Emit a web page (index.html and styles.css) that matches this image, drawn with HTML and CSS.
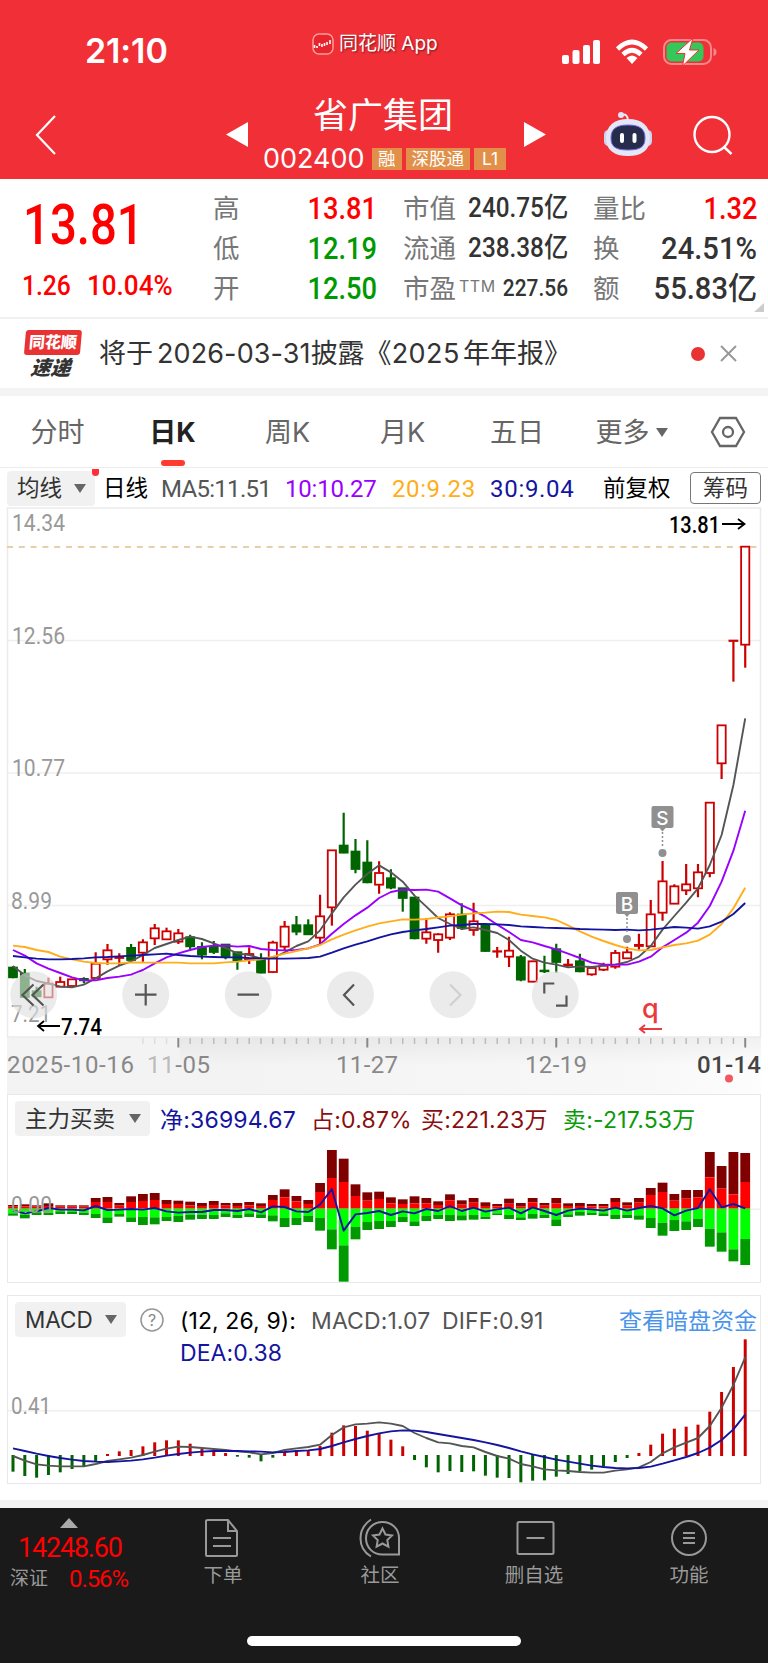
FILE: index.html
```html
<!DOCTYPE html>
<html lang="zh-CN">
<head>
  <meta charset="UTF-8">
  <meta name="viewport" content="width=device-width, initial-scale=1.0">
  <title>省广集团 002400</title>
  <link rel="stylesheet" href="styles.css">
</head>
<body>
  <header class="header">
    <div class="status-bar">
      <div class="time">21:10</div>
      <div class="app-name">
        <svg width="22" height="22" viewBox="0 0 22 22">
          <rect x="1" y="1" width="20" height="20" rx="6" fill="#e8252c" stroke="#ff9a9c" stroke-width="1.5"/>
          <path d="M2.500 12v3M5 13v2M7.500 10v3M10 11v3M12.500 10v3M15 9v3M18 7v4" stroke="#fff" stroke-width="1.600"/>
        </svg>
        <span>同花顺 App</span>
      </div>
      <div class="status-icons">
        <svg width="40" height="26" viewBox="0 0 40 26" fill="#fff">
          <rect x="1" y="16" width="7" height="9" rx="2"/>
          <rect x="11.500" y="11" width="7" height="14" rx="2"/>
          <rect x="22" y="6" width="7" height="19" rx="2"/>
          <rect x="32" y="1" width="7" height="24" rx="2"/>
        </svg>
        <svg width="34" height="26" viewBox="0 0 34 26" fill="none" stroke="#fff" stroke-width="4.600">
          <path d="M2.500 10Q17-4 31.500 10"/>
          <path d="M8 15.500Q17 7 26 15.500"/>
          <path d="M17 25l-5.500-6Q17 14 22.500 19z" fill="#fff" stroke="none"/>
        </svg>
        <svg width="54" height="28" viewBox="0 0 54 28">
          <rect x="1" y="2" width="47" height="24" rx="7.500" fill="none" stroke="#f9888c" stroke-width="2"/>
          <path d="M50.500 10q3 1 3 4t-3 4z" fill="#f9888c"/>
          <rect x="3.500" y="4.500" width="37" height="19" rx="5" fill="#34c759"/>
          <path d="M30 0L13 15.500h9L19.500 28 36 12h-9.500z" fill="#fff" stroke="#f12f37" stroke-width="1"/>
        </svg>
      </div>
    </div>
    <div class="nav">
      <svg class="back" width="24" height="42" viewBox="0 0 24 42"><path d="M21 2L3 21l18 19" fill="none" stroke="#fff" stroke-width="2.200"/></svg>
      <svg class="prev" width="22" height="25" viewBox="0 0 22 25"><path d="M22 0v25L0 12.500z" fill="#fff"/></svg>
      <div class="stock">
        <div class="stock-name">省广集团</div>
        <div class="stock-code">
          <span class="code">002400</span>
          <span class="tag">融</span>
          <span class="tag">深股通</span>
          <span class="tag">L1</span>
        </div>
      </div>
      <svg class="next" width="22" height="25" viewBox="0 0 22 25"><path d="M0 0v25l22-12.500z" fill="#fff"/></svg>
      <svg class="robot" width="48" height="46" viewBox="0 0 48 46">
        <path d="M17 4q7-2 7 6" fill="none" stroke="#e9edfb" stroke-width="2"/>
        <circle cx="17" cy="4" r="3" fill="#dfe4f7"/>
        <rect x="0" y="19" width="9" height="16" rx="4.500" fill="#cbd3ef"/>
        <rect x="39" y="19" width="9" height="16" rx="4.500" fill="#cbd3ef"/>
        <path d="M24 8C38 8 46 15 46 27S38 45 24 45 2 39 2 27 10 8 24 8z" fill="#e3e7f8"/>
        <path d="M24 14c12 0 17 4 17 13s-5 12-17 12S7 36 7 27s5-13 17-13z" fill="#262d4c" stroke="#7568dc" stroke-width="1"/>
        <rect x="16" y="22" width="4" height="10" rx="2" fill="#fff"/>
        <rect x="28.500" y="22" width="4" height="10" rx="2" fill="#fff"/>
      </svg>
      <svg class="search" width="40" height="40" viewBox="0 0 40 40" fill="none" stroke="#fff" stroke-width="2.400"><circle cx="19" cy="19.500" r="17.500"/><path d="M30.500 31.500l8 7.500"/></svg>
    </div>
  </header>

  <section class="quote">
    <div class="price-col">
      <div class="price"><span class="num">13.81</span></div>
      <div class="change"><span class="num">1.26</span><span class="num">10.04%</span></div>
    </div>
    <div class="col col-a">
      <div class="cell"><label>高</label><span class="num up">13.81</span></div>
      <div class="cell"><label>低</label><span class="num down">12.19</span></div>
      <div class="cell"><label>开</label><span class="num down">12.50</span></div>
    </div>
    <div class="col col-b">
      <div class="cell"><label>市值</label><span class="num">240.75亿</span></div>
      <div class="cell"><label>流通</label><span class="num">238.38亿</span></div>
      <div class="cell"><label>市盈<sup>TTM</sup></label><span class="num small">227.56</span></div>
    </div>
    <div class="col col-c">
      <div class="cell"><label>量比</label><span class="num up">1.32</span></div>
      <div class="cell"><label>换</label><span class="num wide">24.51%</span></div>
      <div class="cell"><label>额</label><span class="num wide">55.83亿</span></div>
    </div>
    <div class="corner"></div>
  </section>

  <section class="news">
    <div class="news-logo"><b>同花顺</b><i>速递</i></div>
    <div class="news-text">将于<span class="date">2026-03-31</span>披露《<span class="year">2025</span>年年报》</div>
    <div class="dot"></div>
    <svg width="17" height="17" viewBox="0 0 17 17" stroke="#999" stroke-width="2"><path d="M1 1l15 15M16 1L1 16"/></svg>
  </section>

  <nav class="tabs">
    <div class="tab">分时</div>
    <div class="tab active">日K</div>
    <div class="tab">周K</div>
    <div class="tab">月K</div>
    <div class="tab">五日</div>
    <div class="tab">更多<span class="caret"></span></div>
    <svg width="36" height="32" viewBox="0 0 36 32" fill="none" stroke="#666" stroke-width="2.300"><path d="M10 2h16l8 14-8 14H10L2 16z"/><circle cx="18" cy="16" r="5"/></svg>
  </nav>

  <div class="ma-row">
    <div class="pill">均线<span class="caret"></span></div>
    <span class="period">日线</span>
    <span class="ma ma5">MA5:11.51</span>
    <span class="ma ma10">10:10.27</span>
    <span class="ma ma20">20:9.23</span>
    <span class="ma ma30">30:9.04</span>
    <span class="adjust">前复权</span>
    <span class="chips">筹码</span>
  </div>

  <svg class="chart" id="kline" width="768" height="587" viewBox="0 507 768 587">
    <defs>
      <linearGradient id="strip" x1="0" x2="1" y1="0" y2="0">
        <stop offset="0" stop-color="#f3f3f3"/>
        <stop offset=".3" stop-color="#f3f3f3"/>
        <stop offset=".85" stop-color="#f8f8f8"/>
        <stop offset="1" stop-color="#fdfdfd"/>
      </linearGradient>
      <linearGradient id="shade" x1="0" x2="0" y1="0" y2="1">
        <stop offset="0" stop-color="#000" stop-opacity=".05"/>
        <stop offset=".5" stop-color="#000" stop-opacity="0"/>
      </linearGradient>
    </defs>
    <rect x="7" y="1037" width="754" height="57" fill="url(#strip)"/>
    <rect x="180" y="1037" width="581" height="57" fill="url(#shade)"/>
    <path class="grid" d="M8 640.500H760M8 773H760M8 905.500H760"/>
    <rect class="frame" x="7.500" y="508" width="753" height="529"/>
    <path d="M7 547H759" stroke="#e6cfa9" stroke-width="2" stroke-dasharray="6 5.800"/>
    <g class="axis">
      <text x="12" y="531" textLength="53" lengthAdjust="spacingAndGlyphs">14.34</text>
      <text x="12" y="644" textLength="53" lengthAdjust="spacingAndGlyphs">12.56</text>
      <text x="12" y="776" textLength="53" lengthAdjust="spacingAndGlyphs">10.77</text>
      <text x="11" y="909" textLength="41" lengthAdjust="spacingAndGlyphs">8.99</text>
      <text x="11" y="1022" textLength="40" lengthAdjust="spacingAndGlyphs">7.21</text>
    </g>
    <g id="candles"></g>
    <g class="controls">
      <g fill="#dfdfdf" fill-opacity=".63">
        <circle cx="33.700" cy="994.700" r="23.500"/><circle cx="145.700" cy="994.700" r="23.500"/>
        <circle cx="248.300" cy="994.700" r="23.500"/><circle cx="350.500" cy="994.700" r="23.500"/>
        <circle cx="453" cy="994.700" r="23.500"/><circle cx="555.300" cy="994.700" r="23.500"/>
      </g>
      <path d="M33.500 984.500L22.500 995l11 10.500M43.500 984.500L32.500 995l11 10.500"/>
      <path d="M135 994.700h21.500M145.700 984v21.500M237.500 994.700h21.500M354 984.500L344 995l10 10.500"/>
      <path d="M450 984.500l10.500 10.500-10.500 10.500" stroke="#d0d0d0"/>
      <path d="M544.300 993.500v-10h10M566.500 995.500v10.200h-10.500"/>
    </g>
    <g class="mark">
      <rect x="651.500" y="806" width="22" height="22" rx="2"/><path d="M659 827.500h7l-3.500 4z"/>
      <circle cx="662.500" cy="853" r="4"/><path class="dots" d="M662.500 832v15"/>
      <text x="662.500" y="824.500">S</text>
      <rect x="616" y="892" width="22" height="22" rx="2"/><path d="M623.500 913h7l-3.500 4z"/>
      <circle cx="627" cy="939" r="4"/><path class="dots" d="M627 918v14"/>
      <text x="627" y="910.500">B</text>
    </g>
    <text class="last" x="669" y="532.500" textLength="51" lengthAdjust="spacingAndGlyphs">13.81</text>
    <path d="M722 524h22M738 519l6.500 5-6.500 5" fill="none" stroke="#000" stroke-width="1.800"/>
    <text class="last" x="61" y="1034.500" textLength="41" lengthAdjust="spacingAndGlyphs">7.74</text>
    <path d="M60 1026H38M44 1021l-6 5 6 5" fill="none" stroke="#000" stroke-width="1.800"/>
    <text class="q" x="642" y="1017.500">q</text>
    <path d="M662 1029h-22M645 1025l-5 4 5 4" fill="none" stroke="#e93a3e" stroke-width="2"/>
    <g id="ticks"></g>
    <g class="dates">
      <text x="7" y="1073" textLength="127">2025-10-16</text>
      <text x="147" y="1073" textLength="63"><tspan fill="#bbb">11</tspan>-05</text>
      <text x="336" y="1073" textLength="62">11-27</text>
      <text x="525" y="1073" textLength="62">12-19</text>
      <text class="today" x="697" y="1073" textLength="64">01-14</text>
    </g>
    <circle cx="729" cy="1078.500" r="4" fill="#f0595e"/>
  </svg>

  <section class="panel flow">
    <div class="panel-head">
      <div class="pill">主力买卖<span class="caret"></span></div>
      <span class="navy">净:36994.67</span>
      <span class="maroon">占:0.87%</span>
      <span class="maroon">买:221.23万</span>
      <span class="green">卖:-217.53万</span>
    </div>
    <svg class="chart" id="flow" width="768" height="142" viewBox="0 1142 768 142">
      <path class="grid" d="M8 1209.300H760"/>
      <g id="flow-bars"></g>
      <text class="axis" x="11" y="1213" textLength="41" lengthAdjust="spacingAndGlyphs">0.00</text>
    </svg>
  </section>

  <section class="panel macd">
    <div class="panel-head">
      <div class="pill">MACD<span class="caret"></span></div>
      <svg width="24" height="24" viewBox="0 0 24 24"><circle cx="12" cy="12" r="11" fill="none" stroke="#999" stroke-width="1.600"/><text x="12" y="17.500" class="help">?</text></svg>
      <div class="legend"><span>(12, 26, 9):</span><span class="gray">MACD:1.07</span><span class="gray">DIFF:0.91</span><span class="navy">DEA:0.38</span></div>
      <a class="link">查看暗盘资金</a>
    </div>
    <svg class="chart" id="macd" width="768" height="150" viewBox="0 1335 768 150">
      <path class="grid" d="M8 1410.700H760"/>
      <text class="axis" x="11" y="1414" textLength="40" lengthAdjust="spacingAndGlyphs">0.41</text>
      <g id="macd-bars"></g>
    </svg>
  </section>

  <footer class="footer">
    <div class="index">
      <span class="arrow-up"></span>
      <div class="index-value">14248.60</div>
      <div class="index-row"><span>深证</span><b>0.56%</b></div>
    </div>
    <div class="item">
      <svg width="42" height="40" viewBox="0 0 42 40"><path d="M6 2h20l9 11v24q0 1-1 1H5q-1 0-1-1V3q0-1 2-1zM26 2v11h9M11 20h18M11 28h18"/></svg>
      <span>下单</span>
    </div>
    <div class="item">
      <svg width="42" height="40" viewBox="0 0 42 40"><path d="M23.500 4C33 4 40 11 40 20v16.500H23.500C14 36.500 7 29.500 7 20.300S14 4 23.500 4zM12 1.500C-2 11-2 30 12 38.500M23.500 10.500l3 6 6.500 1-4.700 4.600 1.100 6.600-5.900-3.200-5.900 3.200 1.100-6.600L14 17.500l6.500-1z"/></svg>
      <span>社区</span>
    </div>
    <div class="item">
      <svg width="42" height="40" viewBox="0 0 42 40"><rect x="4.500" y="4" width="36" height="32" rx="1.500"/><path d="M13.500 20h18"/></svg>
      <span>删自选</span>
    </div>
    <div class="item">
      <svg width="42" height="40" viewBox="0 0 42 40"><circle cx="21" cy="20" r="17"/><path d="M15 15h12M15 20h12M15 25h12"/></svg>
      <span>功能</span>
    </div>
    <div class="home-bar"></div>
  </footer>

  <script src="charts.js"></script>
</body>
</html>
```
FILE: styles.css
```css
* {
  box-sizing: border-box;
}
body {
  margin: 0;
  width: 768px;
  background: #fff;
  color: #333;
  font-family: Inter, "Noto Sans CJK SC", sans-serif;
  line-height: 1;
}
svg {
  display: block;
  flex: none;
}
.header {
  height: 179px;
  background: #f12f37;
  color: #fff;
}
.status-bar {
  display: grid;
  grid-template-columns: 312px 248px 1fr;
  height: 96px;
}
.time {
  padding: 34px 0 0 85px;
  font-size: 34px;
  font-weight: 600;
  letter-spacing: -0.1px;
}
.app-name {
  display: flex;
  align-items: center;
  gap: 5px;
  height: 87px;
  font-size: 19px;
  white-space: nowrap;
  text-shadow: 1px 1px 2px rgba(0, 0, 0, 0.5);
}
.status-icons {
  display: flex;
  align-items: center;
  gap: 14px;
  height: 103px;
  padding-left: 1px;
}
.nav {
  display: grid;
  grid-template-columns: 34px 192px 38px 260px 80px 89px 1fr;
  height: 83px;
}
.nav .back {
  grid-column: 2;
  margin-top: 18px;
}
.nav .prev,
.nav .next {
  margin-top: 26px;
}
.nav .robot {
  margin-top: 15px;
}
.nav .search {
  margin-top: 19px;
}
.stock-name {
  padding-left: 49px;
  font-size: 35px;
  line-height: 38px;
}
.stock-code {
  display: flex;
  align-items: center;
  gap: 4px;
  height: 51px;
  padding-bottom: 2px;
}
.code {
  width: 105px;
  margin-left: -1px;
  font-size: 27px;
}
.tag {
  height: 22px;
  padding: 0 6px;
  background: #e29049;
  font-size: 17.500px;
  line-height: 21px;
}
.tag:last-child {
  padding: 0 8px;
}
.quote {
  position: relative;
  display: grid;
  grid-template-columns: 213px 164px 26px 165px 25px 164px;
  height: 140px;
  border-bottom: 2px solid #f0f0f0;
}
.col-a { grid-column: 2; }
.col-b { grid-column: 4; }
.col-c { grid-column: 6; }
.num {
  display: inline-block;
  font-family: Roboto, "Noto Sans CJK SC", sans-serif;
  font-weight: 500;
  white-space: nowrap;
  transform: scaleX(0.88);
  transform-origin: right;
}
.price-col .num {
  color: #f00;
  transform-origin: left;
}
.price {
  padding: 18px 0 0 23px;
  font-size: 55px;
}
.price .num {
  transform: scaleX(0.86);
}
.change {
  display: flex;
  gap: 9px;
  padding: 19px 0 0 22px;
  font-size: 28px;
}
.change .num + .num {
  transform: scaleX(0.93);
}
.col {
  padding-top: 9px;
}
.cell {
  display: flex;
  justify-content: space-between;
  align-items: center;
  height: 40px;
  font-size: 31px;
}
.cell label {
  color: #777;
  font-size: 26.500px;
  white-space: nowrap;
}
.cell sup {
  margin-left: 3px;
  font-size: 16px;
  letter-spacing: 0.5px;
  vertical-align: 6px;
  line-height: 0;
}
.cell .num.wide {
  transform: scaleX(0.94);
}
.col-b .num {
  font-size: 27px;
  transform: scaleX(0.9);
}
.col-b .num.small {
  width: 60px;
  font-size: 24px;
  transform: scaleX(0.87);
  direction: rtl;
}
.up { color: #f00; }
.down { color: #090; }
.corner {
  position: absolute;
  right: 4px;
  bottom: 5px;
  border-bottom: 9px solid #ccc;
  border-left: 10px solid transparent;
}
.news {
  display: flex;
  align-items: center;
  height: 77px;
  padding-left: 24px;
  border-bottom: 8px solid #f4f4f4;
}
.news-logo {
  width: 56px;
  height: 47px;
  margin-right: 2px;
  color: #333;
  text-align: center;
  transform: skewX(-5deg);
}
.news-logo b {
  display: block;
  height: 25px;
  border-radius: 3px;
  background: #e93333;
  color: #fff;
  font-size: 16px;
  font-weight: 900;
  line-height: 24px;
}
.news-logo i {
  font-size: 20px;
  font-weight: 900;
  line-height: 26px;
}
.news-text {
  width: 592px;
  padding-left: 17px;
  font-size: 27px;
  white-space: nowrap;
}
.news-text .date {
  margin-left: 4px;
  letter-spacing: 0.1px;
}
.news-text .year {
  margin-right: 3px;
  letter-spacing: 0.5px;
}
.dot {
  width: 14px;
  height: 14px;
  margin-right: 15px;
  margin-left: 17px;
  border-radius: 50%;
  background: #e93333;
}
.tabs {
  display: grid;
  grid-template-columns: 115px 115px 115px 115px 114px 115px 1fr;
  align-items: center;
  height: 72px;
  border-bottom: 1px solid #ececec;
  color: #666;
  font-size: 27px;
}
.tab {
  display: flex;
  justify-content: center;
  align-items: center;
  height: 71px;
  padding-top: 2px;
}
.tab.active {
  position: relative;
  color: #222;
  font-weight: 700;
}
.tab.active::after {
  content: "";
  position: absolute;
  bottom: 1px;
  width: 24px;
  height: 6px;
  border-radius: 3px;
  background: #ff3b30;
}
.tabs svg {
  margin-left: 21px;
}
.caret {
  border: solid transparent;
  border-width: 9px 6px 0;
  border-top-color: #666;
}
.tab .caret {
  margin-left: 6px;
}
.pill {
  display: flex;
  align-items: center;
  justify-content: space-between;
  height: 35px;
  padding: 0 9px 0 10px;
  border-radius: 4px;
  background: #f1f1f1;
  color: #333;
  font-size: 22.500px;
}
.ma-row {
  display: grid;
  grid-template-columns: 88px 66px 124px 107px 98px 113px 87px 71px;
  align-items: center;
  height: 39px;
  padding-top: 1px;
  padding-left: 7px;
  color: #000;
  font-size: 22.500px;
  white-space: nowrap;
}
.ma-row .pill {
  position: relative;
}
.ma-row .pill::after {
  content: "";
  position: absolute;
  top: -2px;
  right: -4px;
  width: 7px;
  height: 7px;
  border-radius: 0 0 4px 4px;
  background: #ff2d3b;
}
.period { padding-left: 8px; }
.ma {
  padding-top: 1px;
  font-family: Roboto, sans-serif;
  font-size: 24px;
}
.ma5 {
  color: #555;
  letter-spacing: -0.7px;
}
.ma10 {
  color: #90f;
  letter-spacing: -0.2px;
}
.ma20 {
  color: #ffae1a;
  letter-spacing: 0.6px;
}
.ma30 {
  color: #1414a0;
  letter-spacing: 0.7px;
}
.chips {
  height: 32px;
  border: 1.500px solid #777;
  border-radius: 4px;
  color: #333;
  line-height: 29px;
  text-align: center;
}
.grid {
  fill: none;
  stroke: #efefef;
  stroke-width: 1.500;
}
.frame {
  fill: none;
  stroke: #ebebeb;
  stroke-width: 1.500;
}
.axis {
  fill: #999;
  font: 400 24px Roboto, sans-serif;
}
.dates {
  fill: #888;
  font: 400 24px Roboto, sans-serif;
}
.today {
  fill: #444;
  font-weight: 500;
}
.last {
  font: 500 24px Roboto, sans-serif;
}
.q {
  fill: #e93a3e;
  font: 500 27px Inter, sans-serif;
}
.controls path {
  fill: none;
  stroke: #555;
  stroke-width: 2.200;
}
.controls path[stroke] {
  stroke: #d0d0d0;
}
.mark {
  fill: #909090;
}
.mark text {
  fill: #fff;
  font: 500 19px Inter, sans-serif;
  text-anchor: middle;
}
.mark .dots {
  stroke: #909090;
  stroke-width: 1.500;
  stroke-dasharray: 2 2;
}
.line {
  fill: none;
  stroke-width: 1.900;
  stroke-linejoin: round;
}
.panel {
  width: 754px;
  height: 189px;
  margin-left: 7px;
  border: 1.500px solid #e8e8e8;
}
.panel .chart {
  margin-left: -8px;
}
.panel-head {
  display: grid;
  height: 47px;
  padding-left: 7px;
  font-size: 23px;
  white-space: nowrap;
}
.panel-head .pill {
  font-size: 22.500px;
}
.flow .panel-head {
  grid-template-columns: 135px 151px 110px 142px 1fr;
  padding-top: 6px;
  line-height: 39px;
}
.flow .panel-head > span {
  padding-left: 10px;
  letter-spacing: 0.2px;
}
.macd {
  margin-top: 12px;
}
.macd .panel-head {
  grid-template-columns: 111px 52px 1fr 141px;
  height: 39px;
  padding-top: 6px;
  line-height: 38px;
}
.macd .panel-head > svg {
  margin: 6px 0 0 14px;
}
.help {
  fill: #888;
  font: 16px Inter, sans-serif;
  text-anchor: middle;
}
.legend {
  display: grid;
  grid-template-columns: 131px 131px 110px;
  align-content: start;
  padding-top: 3px;
  padding-left: 2px;
  color: #000;
  line-height: 32px;
  letter-spacing: 0.1px;
}
.navy { color: #1414a0; }
.maroon { color: #8b0f0f; }
.green { color: #0a9a0a; }
.legend .gray { color: #555; }
.link {
  color: #4a94ea;
}
.footer {
  display: grid;
  grid-template-columns: 144px 158px 156px 152px 158px;
  grid-template-rows: 128px 1fr;
  height: 163px;
  margin-top: 16px;
  border-top: 8px solid #f4f4f4;
  background: #1a1a1a;
  color: #999;
}
.index {
  padding: 10px 0 0 10px;
}
.arrow-up {
  display: block;
  width: 18px;
  margin-left: 50px;
  border: solid transparent;
  border-width: 0 9px 10px;
  border-bottom-color: #aaa;
}
.index-value {
  padding: 6px 0 0 8px;
  color: #f00;
  font: 400 27px/29px Roboto, sans-serif;
  letter-spacing: -1.200px;
}
.index-row {
  display: flex;
  align-items: center;
  gap: 21px;
  height: 30px;
  padding-top: 1px;
  font-size: 19px;
}
.index-row b {
  color: #f00;
  font: 400 24px Roboto, sans-serif;
  letter-spacing: -1.100px;
}
.item {
  display: flex;
  flex-direction: column;
  align-items: center;
  gap: 8px;
  padding-top: 10px;
  font-size: 19.500px;
}
.item svg {
  fill: none;
  stroke: #999;
  stroke-width: 2;
}
.home-bar {
  grid-column: 1 / -1;
  width: 274px;
  height: 10px;
  margin-left: 247px;
  border-radius: 5px;
  background: #fff;
}
```
FILE: charts.js
```javascript
const STEP = 11.81;
const X0 = 13;
const RED = '#cc0000';
const GREEN = '#006400';
const x = i => X0 + i * STEP;

// data values are thirds of a pixel below the chart's own origin
const scale = origin => v => (origin + v / 3).toFixed(2);

function polyline(values, y, color) {
  const points = values.map((v, i) => `${x(i).toFixed(2)},${y(v)}`).join(' ');
  return `<polyline class="line" points="${points}" stroke="${color}"/>`;
}

// Candles: [high, body top, body bottom, low, 1 = up / 0 = down]
const candles = [
  [529,532,563,565,0],[537,550,622,622,0],[590,603,620,622,0],[563,581,622,622,1],[560,576,590,590,1],
  [568,568,588,588,1],[562,566,572,580,0],[487,521,564,566,1],[462,481,508,524,1],[490,501,505,526,1],
  [462,473,511,512,0],[448,457,488,515,1],[402,415,445,465,1],[413,424,448,448,1],[417,430,455,462,1],
  [434,441,470,478,0],[457,470,495,508,0],[453,470,487,492,0],[462,463,501,508,0],[485,486,514,539,0],
  [472,492,509,522,1],[490,506,549,550,0],[452,458,546,548,1],[393,410,470,482,1],[378,405,426,436,0],
  [388,405,434,434,0],[314,379,443,465,1],[181,181,352,407,1],[68,166,189,190,0],[147,184,238,250,0],
  [151,217,278,280,0],[214,249,284,311,1],[238,264,294,298,0],[294,294,325,365,0],[322,322,446,448,0],
  [384,427,446,461,1],[430,433,450,488,1],[367,373,443,450,1],[340,373,415,420,0],[338,394,420,437,1],
  [402,405,484,486,0],[471,483,486,503,1],[440,482,500,531,1],[495,501,570,574,0],[512,514,575,577,1],
  [497,541,545,549,0],[461,477,517,548,0],[507,523,527,530,1],[491,513,545,547,0],[530,534,553,557,1],
  [518,527,539,543,1],[480,489,530,536,1],[470,487,505,507,1],[431,464,469,479,1],[330,373,469,471,1],
  [213,274,368,392,1],[283,289,341,342,1],[222,283,301,315,1],[222,247,295,322,1],[37,38,249,262,1],
  [-194,-194,-80,-33,1],[-449,-449,-446,-325,1],[-730,-730,-436,-367,1]
];
const ma5 = [528,556,573,580,590,592,584,565,544,527,514,495,474,462,450,440,447,460,474,490,495,506,504,487,468,454,421,370,322,284,252,226,247,275,317,350,384,402,417,412,420,429,450,482,506,518,524,532,529,531,527,524,516,500,468,419,378,338,295,225,135,-15,-215];
const ma10 = [480,497,520,536,549,562,571,571,564,560,554,540,520,502,490,480,471,467,467,470,468,477,480,481,480,475,463,431,402,376,353,324,306,299,300,299,305,325,346,362,380,404,426,450,457,468,478,491,504,518,523,524,524,515,500,472,450,428,398,348,275,182,62];
const ma20 = [467,471,480,486,500,508,515,519,520,520,517,518,518,518,518,520,520,520,517,515,511,508,500,491,483,475,465,448,434,421,410,400,394,388,389,387,382,379,374,370,368,365,366,374,378,382,390,406,424,440,453,465,475,481,480,472,465,460,452,434,402,355,293];
const ma30 = [498,502,506,508,508,507,505,502,501,499,497,495,493,491,495,498,500,501,502,502,504,505,506,506,505,504,500,488,475,464,454,443,433,426,421,417,412,407,405,402,402,403,405,409,411,413,414,415,417,418,419,420,419,421,419,415,411,413,416,409,395,372,339];

function drawKline() {
  const y = scale(790);
  let out = '';
  candles.forEach(([high, top, bottom, low, up], i) => {
    const cx = x(i);
    const color = up ? RED : GREEN;
    out += `<path d="M${cx} ${y(high)}V${y(top)}M${cx} ${y(bottom)}V${y(low)}" stroke="${color}" stroke-width="2.2"/>`;
    const h = Math.max((bottom - top) / 3, 1);
    if (up && h > 2) {
      out += `<rect x="${cx - 4.1}" y="${y(top)}" width="8.2" height="${h}" fill="#fff" stroke="${color}" stroke-width="1.8"/>`;
    } else {
      out += `<rect x="${cx - 4.9}" y="${y(top - 2)}" width="9.8" height="${h + 1.2}" fill="${color}"/>`;
    }
  });
  out += polyline(ma5, y, '#555') + polyline(ma10, y, '#9900ff') + polyline(ma20, y, '#ffae1a') + polyline(ma30, y, '#1414a0');
  document.getElementById('candles').innerHTML = out;

  let ticks = '';
  for (let i = 11; i < 63; i++) {
    const major = (i - 14) % 16 === 0;
    const color = i < 14 ? '#ddd' : major ? '#888' : '#bbb';
    ticks += `<path d="M${x(i)} 1038V${major ? 1047.5 : 1044}" stroke="${color}" stroke-width="${major ? 2 : 1.5}"/>`;
  }
  document.getElementById('ticks').innerHTML = ticks;
}

// Capital flow: [buy top, buy split, sell split, sell bottom]
const flow = [
  [345,350,370,377],[343,349,374,385],[346,350,367,375],[340,348,368,375],[346,350,364,372],[346,350,365,372],[346,350,368,375],
  [324,336,372,384],[321,336,382,399],[339,347,372,380],[319,336,382,396],[312,333,381,405],[309,330,382,403],[330,342,381,393],
  [332,342,378,396],[335,346,374,389],[339,348,374,387],[333,345,375,387],[339,347,370,381],[339,348,374,384],[336,346,370,381],
  [340,348,373,384],[315,330,376,394],[298,322,384,411],[318,334,384,405],[330,342,378,396],[279,306,384,422],[180,264,418,478],
  [206,276,466,575],[283,318,411,448],[307,332,396,420],[305,327,393,417],[322,340,393,411],[328,342,381,396],[319,340,394,408],
  [324,340,378,393],[334,345,375,387],[313,331,375,393],[331,344,376,391],[324,338,375,389],[337,348,380,387],[342,349,370,375],
  [326,341,375,387],[339,350,382,390],[324,337,372,386],[339,347,374,384],[324,340,388,408],[340,348,373,381],[339,348,366,377],
  [342,349,369,375],[342,349,370,378],[324,336,374,387],[337,347,374,384],[324,338,376,389],[294,315,384,414],[278,306,398,437],
  [312,332,390,423],[300,326,394,420],[300,322,387,411],[186,262,416,470],[228,296,427,485],[186,313,478,514],[189,276,447,525]
];
const net = [362,370,364,354,359,359,361,348,360,359,357,359,354,364,368,366,366,360,360,363,357,367,349,351,364,366,344,297,422,373,369,363,375,364,370,357,363,348,363,353,365,358,353,370,352,363,375,362,356,358,362,353,362,354,348,355,376,362,354,298,352,342,355];

function drawFlow() {
  const y = scale(1090);
  const colors = ['#800000', '#ff0000', '#00ff00', '#009900'];
  let out = '';
  flow.forEach(([a, b, c, d], i) => {
    const stops = [a, b, 356, c, d];
    colors.forEach((color, k) => {
      out += `<rect x="${x(i) - 4.9}" y="${y(stops[k])}" width="9.8" height="${(stops[k + 1] - stops[k]) / 3}" fill="${color}"/>`;
    });
  });
  out += polyline(net, y, '#1414a0');
  document.getElementById('flow-bars').innerHTML = out;
}

const bars = [545,558,563,555,547,537,528,515,492,484,480,469,457,451,451,461,477,484,489,500,503,514,503,486,480,480,468,428,406,408,422,431,449,469,510,532,547,543,546,544,557,563,564,577,572,571,560,552,544,539,530,516,504,489,464,431,416,410,404,365,306,231,148];
const diff = [498,512,523,527,529,529,529,522,513,508,503,495,485,476,470,471,474,477,480,484,487,493,489,480,475,471,464,435,412,403,401,397,401,408,429,444,457,460,468,472,486,498,506,522,529,538,541,543,546,548,548,542,538,532,516,490,472,458,444,408,353,285,202];
const dea = [475,483,491,498,504,509,513,515,516,514,512,508,503,497,492,488,485,483,483,483,484,485,487,486,483,481,477,468,457,447,438,430,424,421,422,426,432,438,444,450,457,465,474,484,493,501,509,515,521,527,531,534,535,534,530,521,511,501,489,473,450,418,374];

function drawMacd() {
  const y = scale(1290);
  let out = '';
  bars.forEach((v, i) => {
    out += `<path d="M${x(i)} ${y(v < 497 ? 498 : 495)}V${y(v)}" stroke="${v < 497 ? RED : GREEN}" stroke-width="3"/>`;
  });
  out += polyline(diff, y, '#555') + polyline(dea, y, '#1414a0');
  document.getElementById('macd-bars').innerHTML = out;
}

drawKline();
drawFlow();
drawMacd();
```
